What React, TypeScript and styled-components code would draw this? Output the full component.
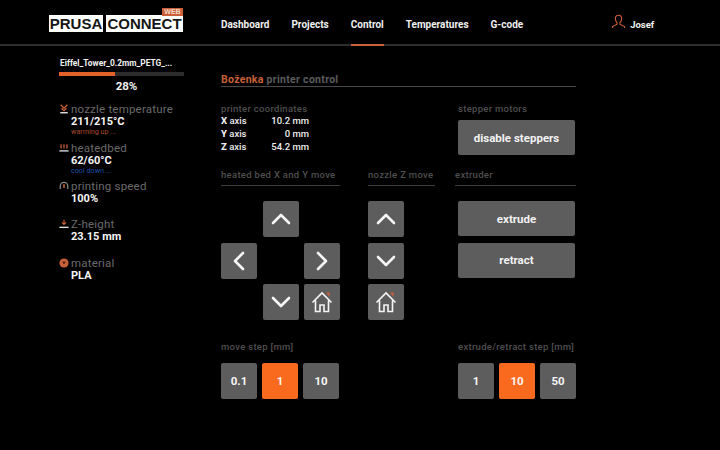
import React from 'react';
import styled, { createGlobalStyle } from 'styled-components';

const orange = '#fa6a1e';
const rust = '#c9603a';

const Global = createGlobalStyle`
  html, body { margin: 0; padding: 0; background: #000; }
  body { font-family: Roboto, "Liberation Sans", sans-serif; color: #f2f2f2; }
`;

const Page = styled.div`
  width: 720px;
  height: 450px;
  overflow: hidden;
  background: #000;
`;

const Header = styled.header`
  height: 44px;
  border-bottom: 2px solid #2e2e2e;
  display: flex;
  align-items: stretch;
  padding-left: 49px;
`;

const Logo = styled.div`
  position: relative;
  width: 172px;
  display: flex;
  gap: 3px;
  padding-top: 15px;
  align-items: flex-start;
`;

const LogoWord = styled.span<{ $w: number }>`
  width: ${(p) => p.$w}px;
  height: 17px;
  background: #fff;
  color: #161616;
  font: 700 15px/17px "Liberation Sans", sans-serif;
  text-align: center;
`;

const WebTag = styled.span`
  position: absolute;
  left: 113px;
  top: 8px;
  width: 21px;
  height: 8px;
  background: ${rust};
  color: #f6d9c8;
  font: 700 7px/8px "Liberation Sans", sans-serif;
  text-align: center;
`;

const Nav = styled.nav`
  display: flex;
  gap: 22px;
`;

const NavItem = styled.a<{ $active?: boolean }>`
  height: 44px;
  box-sizing: border-box;
  padding-top: 18px;
  font-size: 10px;
  line-height: 14px;
  font-weight: 700;
  color: #f0f0f0;
  position: relative;
  &::after {
    content: '';
    display: ${(p) => (p.$active ? 'block' : 'none')};
    position: absolute;
    left: 0;
    right: 0;
    bottom: -2px;
    height: 2px;
    background: ${rust};
  }
`;

const User = styled.div`
  margin-left: 88px;
  display: flex;
  align-items: center;
  gap: 4px;
  font-size: 9.5px;
  font-weight: 700;
`;

const UserName = styled.span`
  margin-top: 5px;
`;

const Body = styled.div`
  display: flex;
`;

const Side = styled.aside`
  width: 125px;
  margin: 0 37px 0 59px;
  padding-top: 12px;
`;

const FileName = styled.div`
  font-size: 8.4px;
  line-height: 11px;
  font-weight: 700;
  padding-left: 1px;
  white-space: nowrap;
`;

const Track = styled.div`
  height: 4px;
  margin-top: 3px;
  background: #2c2c2c;
`;

const Fill = styled.div`
  height: 100%;
  background: #e2622a;
`;

const Percent = styled.div`
  margin-top: 3px;
  padding-left: 10px;
  text-align: center;
  font-size: 11.5px;
  line-height: 14px;
  font-weight: 700;
`;

const Stats = styled.div`
  margin-top: 10px;
  display: flex;
  flex-direction: column;
`;

const Stat = styled.div<{ $h: number }>`
  height: ${(p) => p.$h}px;
  display: grid;
  grid-template-columns: 12px 1fr;
  grid-template-rows: 13px 12px auto;
`;

const StatIcon = styled.svg`
  width: 10px;
  height: 10px;
  margin-top: 1px;
`;

const StatLabel = styled.div`
  font-size: 11.5px;
  line-height: 13px;
  letter-spacing: 0.2px;
  color: #6a6a6a;
  white-space: nowrap;
`;

const StatValue = styled.div`
  grid-column: 2;
  font-size: 11px;
  line-height: 12px;
  font-weight: 700;
  color: #f5f5f5;
`;

const StatNote = styled.div<{ $color: string }>`
  grid-column: 2;
  font-size: 7.2px;
  line-height: 7px;
  color: ${(p) => p.$color};
`;

const Main = styled.main`
  width: 355px;
  padding-top: 27px;
`;

const Title = styled.div`
  height: 13px;
  border-bottom: 1px solid #4a4a4a;
  font-size: 10.5px;
  line-height: 13px;
  font-weight: 700;
  letter-spacing: 0.3px;
  color: #5c5c5c;
`;

const Owner = styled.span`
  color: ${rust};
`;

const TopRow = styled.div`
  display: flex;
  margin-top: 16px;
`;

const Coordinates = styled.div`
  width: 237px;
`;

const Label = styled.div<{ $line?: boolean }>`
  font-size: 9.5px;
  line-height: 11px;
  font-weight: 500;
  letter-spacing: 0.3px;
  color: #4f4f4f;
  white-space: nowrap;
  ${(p) => p.$line && 'height: 16px; border-bottom: 1px solid #3c3c3c;'}
`;

const CoordRow = styled.div`
  width: 88px;
  height: 13px;
  display: flex;
  justify-content: space-between;
  font-size: 9.5px;
  line-height: 13px;
  font-weight: 500;
  color: #eee;
`;

const Axis = styled.b`
  font-weight: 800;
`;

const Wide = styled.div`
  width: 117px;
  height: 35px;
  background: #5d5d5d;
  border-radius: 2px;
  display: flex;
  align-items: center;
  justify-content: center;
  font-size: 11.5px;
  font-weight: 700;
  color: #f2f2f2;
`;

const Stepper = styled.div`
  & > ${Wide} {
    margin-top: 6px;
  }
`;

const Heads = styled.div`
  display: grid;
  grid-template-columns: 147px 87px 121px;
  margin-top: 14px;
  & > :nth-child(1) {
    margin-right: 28px;
  }
  & > :nth-child(2) {
    margin-right: 20px;
  }
`;

const Pads = styled.div`
  display: flex;
  margin-top: 15px;
  height: 119px;
`;

const XYPad = styled.div`
  width: 147px;
  display: grid;
  grid-template-columns: 36px 36px 36px;
  grid-template-rows: 36px 36px 36px;
  column-gap: 5.5px;
  row-gap: 5.5px;
`;

const ZPad = styled.div`
  width: 90px;
  display: grid;
  grid-template-rows: 36px 36px 36px;
  grid-template-columns: 36px;
  row-gap: 5.5px;
`;

const Key = styled.div<{ $col?: number; $row?: number; $on?: boolean }>`
  ${(p) => p.$col && `grid-column: ${p.$col};`}
  ${(p) => p.$row && `grid-row: ${p.$row};`}
  width: 36px;
  height: 36px;
  border-radius: 2px;
  background: ${(p) => (p.$on ? orange : '#5d5d5d')};
  color: #f5f5f5;
  display: flex;
  align-items: center;
  justify-content: center;
  font-size: 11.5px;
  font-weight: 700;
`;

const ExtruderPad = styled.div`
  display: flex;
  flex-direction: column;
  gap: 6.5px;
`;

const Steps = styled.div`
  display: flex;
  margin-top: 21px;
`;

const StepGroup = styled.div<{ $w: number }>`
  width: ${(p) => p.$w}px;
`;

const StepKeys = styled.div`
  display: flex;
  gap: 5px;
  margin-top: 11px;
`;

const Chevron = ({ d }: { d: string }) => (
  <svg width="20" height="20" viewBox="0 0 20 20" fill="none" stroke="#f5f5f5" strokeWidth="2.6" strokeLinecap="round" strokeLinejoin="round">
    <path d={d} />
  </svg>
);

const up = 'M2 14 10 6l8 8';
const down = 'M2 6l8 8 8-8';
const left = 'M14 2 6 10l8 8';
const right = 'M6 2l8 8-8 8';

const Home = () => (
  <svg width="22" height="22" viewBox="0 0 22 22" fill="none">
    <path d="M15 1.500h3.500v4.500z" fill={rust} />
    <path d="M1.500 11.500 11 2l9.500 9.500M4.500 9.500V20.500h4.500v-6.500h4v6.500h4.500V9.500" stroke="#f5f5f5" strokeWidth="1.600" />
  </svg>
);

const moveSteps = ['0.1', '1', '10'];
const extrudeSteps = ['1', '10', '50'];

export default function App() {
  return (
    <Page>
      <Global />
      <Header>
        <Logo>
          <LogoWord $w={54}>PRUSA</LogoWord>
          <LogoWord $w={77}>CONNECT</LogoWord>
          <WebTag>WEB</WebTag>
        </Logo>
        <Nav>
          <NavItem>Dashboard</NavItem>
          <NavItem>Projects</NavItem>
          <NavItem $active>Control</NavItem>
          <NavItem>Temperatures</NavItem>
          <NavItem>G-code</NavItem>
        </Nav>
        <User>
          <svg width="15" height="16" viewBox="0 0 15 16" fill="none" stroke={rust} strokeWidth="1.100">
            <path d="M7.500 1.200c2 0 3.200 1.500 3.200 3.500 0 1.700-.8 3-1.700 3.800v1.700l4.500 2.300v1.500M7.500 1.200c-2 0-3.200 1.500-3.200 3.500 0 1.700.8 3 1.700 3.800v1.700l-4.500 2.300v1.500" />
          </svg>
          <UserName>Josef</UserName>
        </User>
      </Header>
      <Body>
        <Side>
          <FileName>Eiffel_Tower_0.2mm_PETG_...</FileName>
          <Track>
            <Fill style={{ width: '45%' }} />
          </Track>
          <Percent>28%</Percent>
          <Stats>
            <Stat $h={39}>
              <StatIcon viewBox="0 0 12 12" fill="none" stroke={rust}>
                <path d="M2 1l4 4 4-4M3 5l3 3 3-3" strokeWidth="1.600" />
                <path d="M1.500 10.500h9" stroke="#eee" strokeWidth="1.600" />
              </StatIcon>
              <StatLabel>nozzle temperature</StatLabel>
              <StatValue>211/215°C</StatValue>
              <StatNote $color="#a8482a">warming up ...</StatNote>
            </Stat>
            <Stat $h={38}>
              <StatIcon viewBox="0 0 12 12" fill="none" stroke={rust}>
                <path d="M2.500 1.500v5M6 1.500v5M9.500 1.500v5" strokeWidth="1.500" />
                <path d="M.5 9.500h11" stroke="#eee" strokeWidth="1.500" />
              </StatIcon>
              <StatLabel>heatedbed</StatLabel>
              <StatValue>62/60°C</StatValue>
              <StatNote $color="#1f4fa8">cool down ...</StatNote>
            </Stat>
            <Stat $h={38}>
              <StatIcon viewBox="0 0 12 12" fill="none">
                <path d="M1.500 9.500V6a4.500 4.500 0 0 1 9 0v3.500" stroke="#8a8a8a" strokeWidth="1.500" />
                <path d="M6 4v4" stroke={rust} strokeWidth="2" />
              </StatIcon>
              <StatLabel>printing speed</StatLabel>
              <StatValue>100%</StatValue>
            </Stat>
            <Stat $h={39}>
              <StatIcon viewBox="0 0 12 12" fill="none" stroke={rust}>
                <path d="M6 1v5M3.500 4 6 6.500 8.500 4" strokeWidth="1.300" />
                <path d="M.5 10h11" stroke="#eee" strokeWidth="1.500" />
              </StatIcon>
              <StatLabel>Z-height</StatLabel>
              <StatValue>23.15 mm</StatValue>
            </Stat>
            <Stat $h={30}>
              <StatIcon viewBox="0 0 12 12">
                <circle cx="6" cy="6" r="5.500" fill={rust} />
                <path d="M4 4.500h4L6 7.500z" fill="#2a1208" />
              </StatIcon>
              <StatLabel>material</StatLabel>
              <StatValue>PLA</StatValue>
            </Stat>
          </Stats>
        </Side>
        <Main>
          <Title>
            <Owner>Boženka</Owner> printer control
          </Title>
          <TopRow>
            <Coordinates>
              <Label>printer coordinates</Label>
              <CoordRow><span><Axis>X</Axis> axis</span><span>10.2 mm</span></CoordRow>
              <CoordRow><span><Axis>Y</Axis> axis</span><span>0 mm</span></CoordRow>
              <CoordRow><span><Axis>Z</Axis> axis</span><span>54.2 mm</span></CoordRow>
            </Coordinates>
            <Stepper>
              <Label>stepper motors</Label>
              <Wide>disable steppers</Wide>
            </Stepper>
          </TopRow>
          <Heads>
            <Label $line>heated bed X and Y move</Label>
            <Label $line>nozzle Z move</Label>
            <Label $line>extruder</Label>
          </Heads>
          <Pads>
            <XYPad>
              <Key $col={2} $row={1}><Chevron d={up} /></Key>
              <Key $col={1} $row={2}><Chevron d={left} /></Key>
              <Key $col={3} $row={2}><Chevron d={right} /></Key>
              <Key $col={2} $row={3}><Chevron d={down} /></Key>
              <Key $col={3} $row={3}><Home /></Key>
            </XYPad>
            <ZPad>
              <Key><Chevron d={up} /></Key>
              <Key><Chevron d={down} /></Key>
              <Key><Home /></Key>
            </ZPad>
            <ExtruderPad>
              <Wide>extrude</Wide>
              <Wide>retract</Wide>
            </ExtruderPad>
          </Pads>
          <Steps>
            <StepGroup $w={237}>
              <Label>move step [mm]</Label>
              <StepKeys>
                {moveSteps.map((s) => (
                  <Key key={s} $on={s === '1'}>{s}</Key>
                ))}
              </StepKeys>
            </StepGroup>
            <StepGroup $w={118}>
              <Label>extrude/retract step [mm]</Label>
              <StepKeys>
                {extrudeSteps.map((s) => (
                  <Key key={s} $on={s === '10'}>{s}</Key>
                ))}
              </StepKeys>
            </StepGroup>
          </Steps>
        </Main>
      </Body>
    </Page>
  );
}
